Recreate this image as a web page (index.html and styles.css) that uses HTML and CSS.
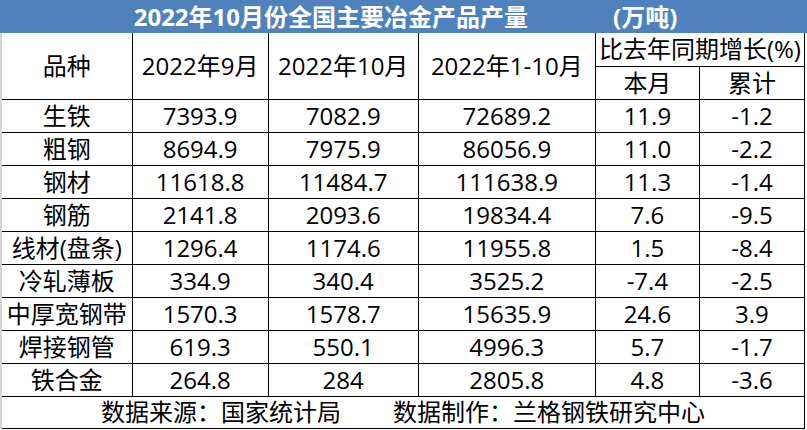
FILE: index.html
```html
<!DOCTYPE html>
<html lang="zh-CN">
<head>
<meta charset="utf-8">
<title>2022年10月份全国主要冶金产品产量</title>
<link rel="stylesheet" href="styles.css">
</head>
<body>
<div class="page">
  <div class="title"><span class="title-main">2022年10月份全国主要冶金产品产量</span><span class="title-unit">(万吨)</span></div>
  <div class="sheet">
    <table class="data">
      <colgroup>
        <col class="c1"><col class="c2"><col class="c3"><col class="c4"><col class="c5"><col class="c6">
      </colgroup>
      <thead>
        <tr class="hrow">
          <th rowspan="2">品种</th>
          <th rowspan="2">2022年9月</th>
          <th rowspan="2">2022年10月</th>
          <th rowspan="2">2022年1-10月</th>
          <th colspan="2" class="yoy">比去年同期增长(%)</th>
        </tr>
        <tr class="hrow">
          <th>本月</th>
          <th>累计</th>
        </tr>
      </thead>
      <tbody>
        <tr><td>生铁</td><td>7393.9</td><td>7082.9</td><td>72689.2</td><td>11.9</td><td>-1.2</td></tr>
        <tr><td>粗钢</td><td>8694.9</td><td>7975.9</td><td>86056.9</td><td>11.0</td><td>-2.2</td></tr>
        <tr><td>钢材</td><td>11618.8</td><td>11484.7</td><td>111638.9</td><td>11.3</td><td>-1.4</td></tr>
        <tr><td>钢筋</td><td>2141.8</td><td>2093.6</td><td>19834.4</td><td>7.6</td><td>-9.5</td></tr>
        <tr><td>线材(盘条)</td><td>1296.4</td><td>1174.6</td><td>11955.8</td><td>1.5</td><td>-8.4</td></tr>
        <tr><td>冷轧薄板</td><td>334.9</td><td>340.4</td><td>3525.2</td><td>-7.4</td><td>-2.5</td></tr>
        <tr><td>中厚宽钢带</td><td>1570.3</td><td>1578.7</td><td>15635.9</td><td>24.6</td><td>3.9</td></tr>
        <tr><td>焊接钢管</td><td>619.3</td><td>550.1</td><td>4996.3</td><td>5.7</td><td>-1.7</td></tr>
        <tr><td>铁合金</td><td>264.8</td><td>284</td><td>2805.8</td><td>4.8</td><td>-3.6</td></tr>
      </tbody>
      <tfoot>
        <tr class="frow">
          <td colspan="6"><div class="source"><span>数据来源：国家统计局</span><span>数据制作：兰格钢铁研究中心</span></div></td>
        </tr>
      </tfoot>
    </table>
  </div>
</div>
</body>
</html>
```
FILE: styles.css
```css
html, body {
  margin: 0;
  padding: 0;
  background: #ffffff;
}
.page {
  width: 807px;
  height: 430px;
  font-family: "Open Sans", "Noto Sans CJK SC", sans-serif;
  color: #000;
  overflow: hidden;
}
.title {
  height: 33px;
  background: #4f81bd;
  color: #ffffff;
  font-weight: 700;
  font-size: 24px;
  line-height: 33px;
  display: flex;
  justify-content: center;
  padding-left: 4px;
}
.title-unit {
  margin-left: 85px;
}
.sheet {
  border-left: 2px solid #d4d4d4;
  width: 803px;
}
.data {
  border-collapse: collapse;
  table-layout: fixed;
  width: 803px;
  font-size: 24px;
}
.c1 { width: 130px; }
.c2 { width: 136px; }
.c3 { width: 150px; }
.c4 { width: 177px; }
.c5 { width: 104px; }
.c6 { width: 105px; }
.data th, .data td {
  border: 1px solid #000;
  padding: 0;
  text-align: center;
  vertical-align: middle;
  font-weight: 400;
  line-height: 1;
  white-space: nowrap;
}
.data tr > :first-child {
  border-left: none;
}
.data thead tr:first-child th {
  border-top: none;
}
.hrow {
  height: 33px;
}
.data tbody tr {
  height: 33px;
}
.frow {
  height: 32px;
}
.source {
  display: flex;
  justify-content: center;
  gap: 52px;
}
```
